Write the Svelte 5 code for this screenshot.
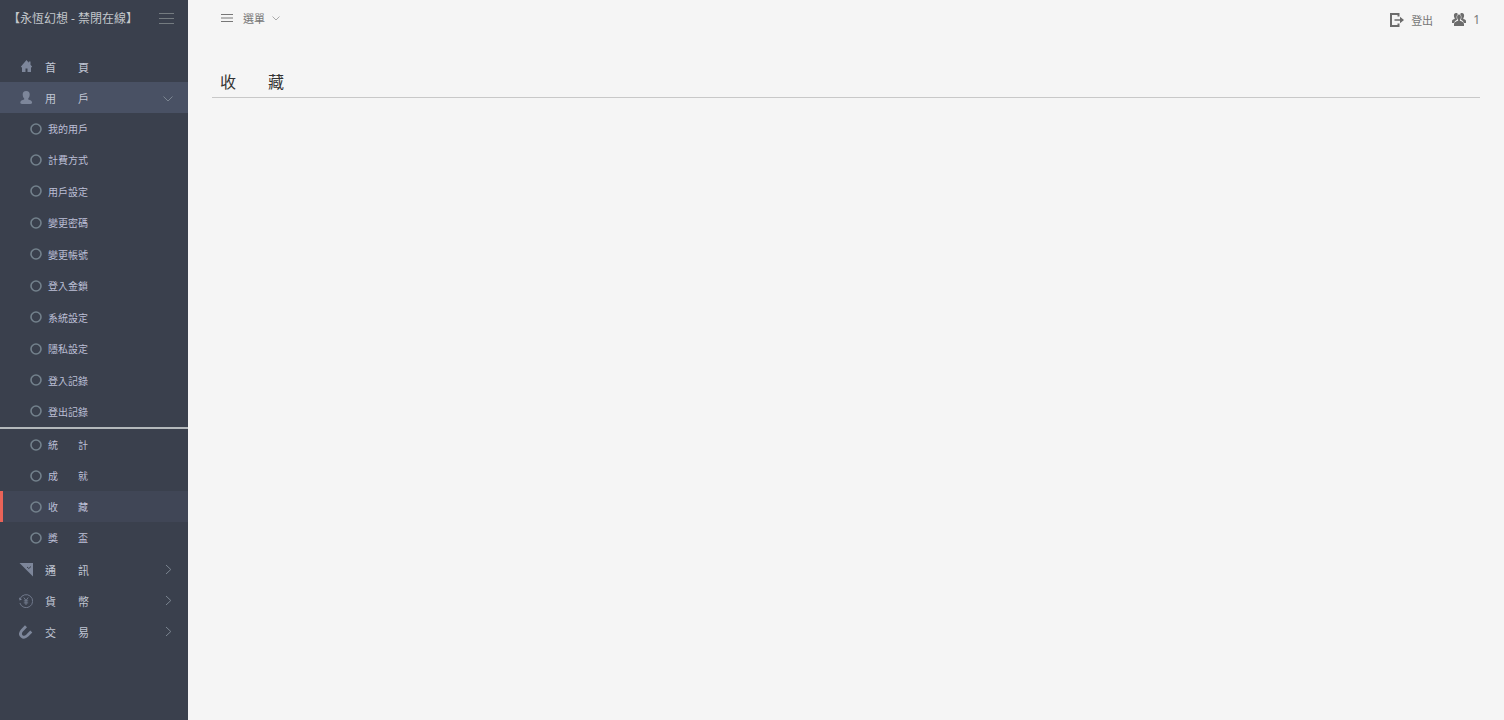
<script lang="ts">
	type Item = { label: string, active?: boolean };

	let userOpen = $state(true);

	const accountItems: Item[] = [
		{ label: "我的用戶" },
		{ label: "計費方式" },
		{ label: "用戶設定" },
		{ label: "變更密碼" },
		{ label: "變更帳號" },
		{ label: "登入金鎖" },
		{ label: "系統設定" },
		{ label: "隱私設定" },
		{ label: "登入記錄" },
		{ label: "登出記錄" }
	];
	const recordItems: Item[] = [
		{ label: "統　　計" },
		{ label: "成　　就" },
		{ label: "收　　藏", active: true },
		{ label: "獎　　盃" }
	];
	const sections = [
		{ label: "通　　訊", icon: "mail" },
		{ label: "貨　　幣", icon: "coin" },
		{ label: "交　　易", icon: "magnet" }
	];
</script>

{#snippet icon(name: string)}
	<svg class="icon" viewBox="0 0 14 14" aria-hidden="true">
		{#if name === "home"}
			<path d="M7.500 0 2 6.500v.8h1V12h3.500V8.500h2V12H12V7.300h1v-.8l-1.500-1.800V1.500H9.800v1.200z" />
		{:else if name === "user"}
			<path d="M7.200 0c2.500 0 3.500 1.500 3.500 3.400 0 1.900-.7 3.200-1.500 4v1c2.200.5 3.900 1.200 3.900 3.200 0 1-.6 1.400-1.600 1.400H2.900c-1 0-1.600-.4-1.600-1.400 0-2 1.700-2.700 3.900-3.200v-1c-.8-.8-1.500-2.100-1.500-4C3.700 1.500 4.700 0 7.200 0z" />
		{:else if name === "mail"}
			<path d="M.5 0H14v13.500z" />
			<path class="notch" d="m8 4 1.800 1.500L12 3.500" />
		{:else if name === "coin"}
			<path class="line" d="M1.200 4.500A6.500 6.500 0 1 1 .9 9" />
			<path d="M0 3.500 3 5.200.6 6.500z" />
			<path class="line" d="M4.800 3.500 7 6.500l2.200-3M7 6.500V11M4.800 6.900h4.400M4.800 8.900h4.400" />
		{:else if name === "magnet"}
			<path class="thick" d="M7 1.200 3.200 5.200C1.200 7.500 1 9.800 2.600 11.200c1.600 1.500 3.800 1.200 5.700-.6l4-4" />
		{/if}
	</svg>
{/snippet}

{#snippet chevron(down: boolean)}
	<svg class="chevron" viewBox="0 0 12 12" aria-hidden="true">
		<path d={down ? "M1.500 4.500 6 9l4.500-4.500" : "M4 1 8.800 5.500 4 10"} />
	</svg>
{/snippet}

{#snippet submenu(items: Item[], cls: string)}
	<ul class="submenu {cls}">
		{#each items as item}
			<li>
				<a href="#item" class:active={item.active} aria-current={item.active ? "page" : undefined}>
					<svg class="ring" viewBox="0 0 12 12" aria-hidden="true"><circle cx="6" cy="6" r="5" /></svg>
					{item.label}
				</a>
			</li>
		{/each}
	</ul>
{/snippet}

<div class="layout">
	<aside>
		<header class="brand">
			<span>【永恆幻想 - 禁閉在線】</span>
			<button class="toggle" aria-label="切換選單">
				<svg viewBox="0 0 16 12" aria-hidden="true"><path d="M1 1.500h15M1 6.500h15M1 11.500h15" /></svg>
			</button>
		</header>
		<nav>
			<a class="entry" href="#home">{@render icon("home")}首　　頁</a>
			<button class="entry open" aria-expanded={userOpen} onclick={() => userOpen = !userOpen}>
				{@render icon("user")}用　　戶{@render chevron(userOpen)}
			</button>
			{#if userOpen}
				{@render submenu(accountItems, "account")}
				<hr />
				{@render submenu(recordItems, "records")}
			{/if}
			{#each sections as section}
				<button class="entry" aria-expanded="false">
					{@render icon(section.icon)}{section.label}{@render chevron(false)}
				</button>
			{/each}
		</nav>
	</aside>

	<main>
		<div class="topbar">
			<button class="menu">
				<svg class="bars" viewBox="0 0 12 9" aria-hidden="true"><path d="M0 .5h12M0 4h12M0 7.500h12" /></svg>
				選單
				<svg class="caret" viewBox="0 0 8 8" aria-hidden="true"><path d="M.5 2.500 4 6l3.500-3.500" /></svg>
			</button>
			<div class="actions">
				<a href="#logout">
					<svg viewBox="0 0 14 14" aria-hidden="true">
						<path class="door" d="M8.500 3.500V1H1v12h7.500v-2.500" />
						<path d="M4.500 6.200H10V3.800L14 7l-4 3.200V7.800H4.500z" />
					</svg>
					登出
				</a>
				<a href="#online">
					<svg viewBox="0 0 14 14" aria-hidden="true">
						<path d="M4 0c1 0 1.600.4 1.900 1.200C4.700 2.200 4.400 3.700 4.700 5.200c.1.700.3 1.200.6 1.600C3.600 7.600 2.600 8.300 2.200 10H0V8c0-1 1.300-1.600 2.700-2V5.200C2.100 4.600 1.900 3.700 1.900 2.500 1.900 1 2.600 0 4 0zM10 0c-1 0-1.600.4-1.900 1.200 1.200 1 1.500 2.500 1.200 4-.1.700-.3 1.200-.6 1.600 1.700.8 2.700 1.500 3.100 3.200H14V8c0-1-1.300-1.600-2.700-2v-.8c.6-.6.8-1.500.8-2.700C12.100 1 11.400 0 10 0z" />
						<path d="M7 1.500c1.300 0 1.900.9 1.900 2.500 0 1.300-.4 2.200-1 2.700v1c1.900.6 4.100 1.400 4.100 3.300v2H2v-2c0-1.900 2.200-2.700 4.100-3.300v-1c-.6-.5-1-1.400-1-2.700 0-1.600.6-2.500 1.900-2.500z" />
					</svg>
					<span class="count">1</span>
				</a>
			</div>
		</div>
		<h1>收　　藏</h1>
	</main>
</div>

<style>
:global(body) {
	margin: 0;
	background: #f5f5f5;
	font-family: "Noto Sans", "Noto Sans CJK TC", sans-serif;
	font-size: 11px;
}
.layout {
	display: flex;
	min-height: 100vh;
}
button {
	margin: 0;
	border: 0;
	background: none;
	font: inherit;
	cursor: pointer;
}
a {
	text-decoration: none;
}
svg {
	display: block;
	flex: none;
	fill: currentColor;
}
aside {
	flex: 0 0 188px;
	background: #3a404d;
	color: #c0c6d4;
}
.brand {
	display: flex;
	align-items: center;
	justify-content: space-between;
	height: 36px;
	margin-bottom: 15px;
	padding: 0 14px 0 8px;
	color: #c3c7cb;
	font-size: 12px;
	white-space: nowrap;
}
.toggle {
	padding: 0;
	color: #747b80;
}
.toggle svg {
	width: 16px;
	height: 12px;
	stroke: currentColor;
}
.entry {
	display: flex;
	align-items: center;
	box-sizing: border-box;
	width: 100%;
	height: 31px;
	padding: 0 14px 0 19px;
	color: inherit;
	text-align: left;
}
.open {
	background: #495164;
}
.icon {
	width: 14px;
	height: 14px;
	margin-right: 12px;
	color: #7d869a;
}
.icon .notch {
	fill: none;
	stroke: #3a404d;
}
.icon .line {
	fill: none;
	stroke: currentColor;
	stroke-width: 0.8;
}
.icon .thick {
	fill: none;
	stroke: currentColor;
	stroke-width: 2.800;
}
.chevron {
	width: 12px;
	height: 12px;
	margin-left: auto;
	fill: none;
	stroke: #7b8591;
}
.submenu {
	display: flex;
	flex-direction: column;
	justify-content: space-between;
	margin: 0;
	padding: 0;
	list-style: none;
}
.account {
	min-height: 314px;
}
.records {
	min-height: 124px;
	padding-bottom: 1px;
}
.submenu a {
	display: flex;
	align-items: center;
	gap: 6px;
	height: 31px;
	padding-left: 27px;
	border-left: 3px solid transparent;
	color: #bcbfd6;
	font-size: 10px;
}
.submenu a.active {
	border-color: #e96358;
	background: #404656;
}
.ring {
	width: 12px;
	height: 12px;
	fill: none;
	stroke: #73818c;
	stroke-width: 1.6;
}
hr {
	height: 2px;
	margin: 0;
	border: 0;
	background: #b4b9bc;
}
main {
	flex: 1;
	padding: 0 24px;
}
.topbar {
	display: flex;
	align-items: center;
	justify-content: space-between;
	height: 36px;
	margin-bottom: 31px;
	color: #777;
}
.menu {
	display: flex;
	align-items: center;
	padding: 0 9px;
	color: inherit;
}
.bars {
	width: 12px;
	height: 9px;
	margin-right: 10px;
	stroke: currentColor;
}
.caret {
	width: 8px;
	height: 8px;
	margin-left: 7px;
	fill: none;
	stroke: #aaa;
}
.actions {
	display: flex;
	gap: 19px;
	padding-top: 3px;
}
.actions a {
	display: flex;
	align-items: center;
	gap: 7px;
	color: #777;
}
.actions svg {
	width: 14px;
	height: 14px;
	color: #6c6c6c;
}
.count {
	font-size: 12px;
}
.door {
	fill: none;
	stroke: currentColor;
	stroke-width: 2;
}
h1 {
	margin: 0;
	padding: 0 8px;
	border-bottom: 1px solid #c8c8c8;
	color: #333;
	font-size: 16px;
	font-weight: 400;
	line-height: 30px;
}
</style>
